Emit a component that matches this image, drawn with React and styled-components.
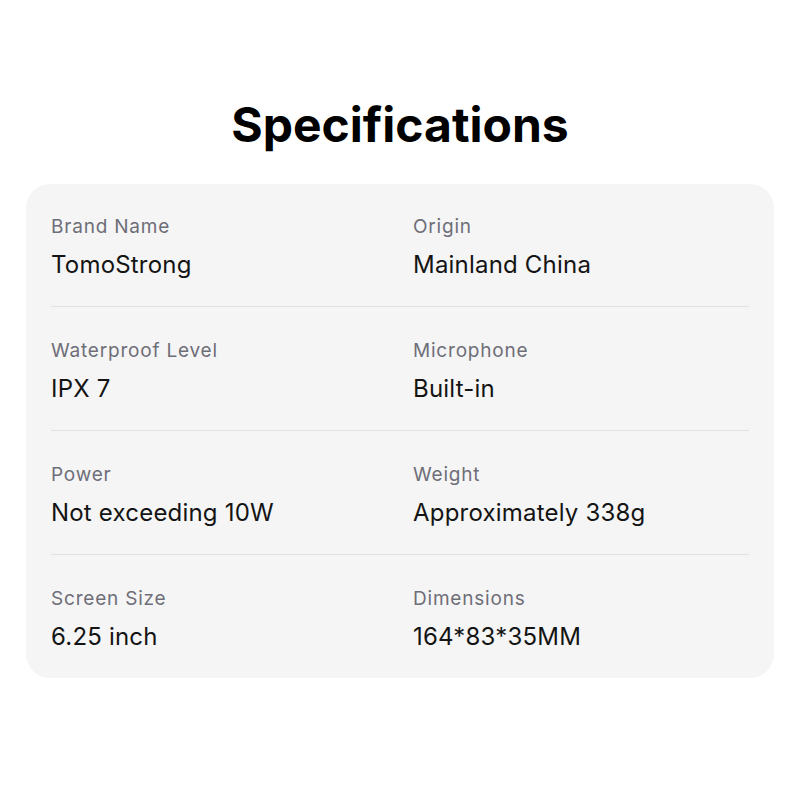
import React from 'react';
import styled, { createGlobalStyle } from 'styled-components';

const GlobalStyle = createGlobalStyle`
  body {
    margin: 0;
    background: #ffffff;
    font-family: 'Inter', 'Liberation Sans', sans-serif;
  }
`;

const Page = styled.div`
  width: 800px;
  padding-top: 96px;
  box-sizing: border-box;
`;

const Title = styled.h1`
  margin: 0 0 30px;
  text-align: center;
  font-size: 48px;
  line-height: 58px;
  font-weight: 700;
  color: #000;
`;

const Card = styled.div`
  margin: 0 26px;
  padding: 0 25px;
  background: #f5f5f5;
  border-radius: 24px;
`;

const Row = styled.div`
  display: grid;
  grid-template-columns: 362px 1fr;
  padding: ${(p) => (p.$first ? '31px' : '32px')} 0 26px;
  border-top: ${(p) => (p.$first ? 'none' : '1px solid #e1e1e1')};
`;

const Label = styled.div`
  font-size: 19px;
  line-height: 24px;
  letter-spacing: 0.8px;
  color: #6e6e78;
`;

const Value = styled.div`
  margin-top: 11px;
  font-size: 24px;
  line-height: 30px;
  letter-spacing: 0.2px;
  color: #141414;
`;

const specs = [
  [['Brand Name', 'TomoStrong'], ['Origin', 'Mainland China']],
  [['Waterproof Level', 'IPX 7'], ['Microphone', 'Built-in']],
  [['Power', 'Not exceeding 10W'], ['Weight', 'Approximately 338g']],
  [['Screen Size', '6.25 inch'], ['Dimensions', '164*83*35MM']],
];

export default function App() {
  return (
    <Page>
      <GlobalStyle />
      <Title>Specifications</Title>
      <Card>
        {specs.map((row, i) => (
          <Row key={i} $first={i === 0}>
            {row.map(([label, value]) => (
              <div key={label}>
                <Label>{label}</Label>
                <Value>{value}</Value>
              </div>
            ))}
          </Row>
        ))}
      </Card>
    </Page>
  );
}
